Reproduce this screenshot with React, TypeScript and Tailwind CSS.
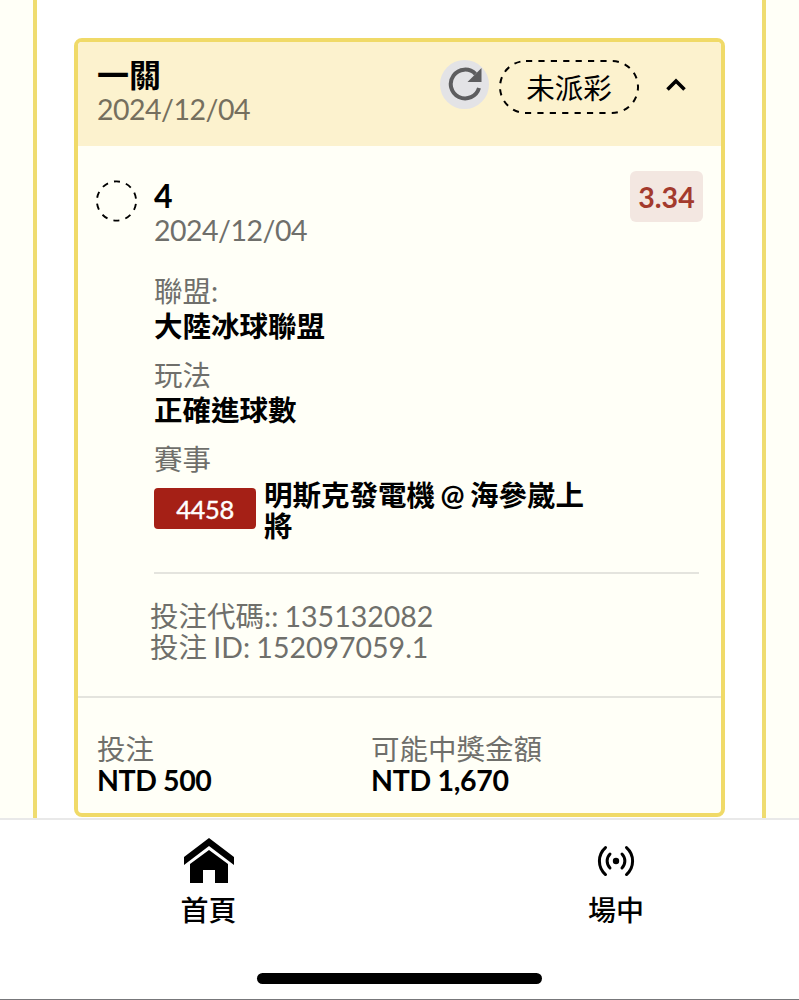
const details = [
  { label: "聯盟:", value: "大陸冰球聯盟" },
  { label: "玩法", value: "正確進球數" },
];

const HomeIcon = () => {
  return (
    <svg width="50" height="45" viewBox="0 0 50 45" fill="black">
      <path d="M25 0L50 19V27L25 8L0 27V19Z" />
      <path d="M25 12L44 26V45H31V32H19V45H6V26Z" />
    </svg>
  );
};

const LiveIcon = () => {
  return (
    <svg width="38" height="32" viewBox="0 0 38 32" fill="none" stroke="black" strokeWidth="3" strokeLinecap="round">
      <circle cx="19" cy="16" r="3.2" fill="black" stroke="none" />
      <path d="M13 9A10 10 0 0 0 13 23" />
      <path d="M25 9A10 10 0 0 1 25 23" />
      <path d="M8.5 2.5A18 18 0 0 0 8.5 29.5" />
      <path d="M29.5 2.5A18 18 0 0 1 29.5 29.5" />
    </svg>
  );
};

const BetHeader = () => {
  return (
    <div className="flex h-[104px] justify-between bg-[#fcf2ce] pl-[19px] pr-[35px]">
      <div className="pt-4">
        <div className="text-[32px] leading-[34px] font-bold">一關</div>
        <div className="leading-[34px] tracking-[-0.5px] text-[#756f5e]">2024/12/04</div>
      </div>
      <div className="flex h-[54px] mt-[17px] items-center">
        {/* Refresh */}
        <button className="flex size-[49px] mr-2.5 -mt-1 items-center justify-center rounded-full bg-[#e3e3e6]">
          <svg width="34" height="34" viewBox="0 0 34 34" fill="none">
            <path d="M27.5 7A14.4 14.4 0 1 0 31 21" stroke="#5d5d5f" strokeWidth="4" />
            <path d="M33.5 1V15H19.5Z" fill="#5d5d5f" />
          </svg>
        </button>
        <div className="relative flex h-[54px] w-[140px] mt-0.5 items-center justify-center">
          <svg className="absolute inset-0" width="140" height="54" fill="none">
            <rect x="1" y="1" width="138" height="52" rx="26" stroke="black" strokeWidth="2" strokeDasharray="6.2 6.2" />
          </svg>
          <span className="leading-[34px] mt-0.5">未派彩</span>
        </div>
        <svg className="ml-[27px] -mt-1" width="20" height="13" viewBox="0 0 20 13" fill="none">
          <path d="M1.5 11.5L10 3L18.5 11.5" stroke="black" strokeWidth="3.6" />
        </svg>
      </div>
    </div>
  );
};

const BetBody = () => {
  return (
    <div className="flex h-[550px] pl-[18px] pr-[18px]">
      <svg className="mt-[34px] mr-[16px] shrink-0" width="42" height="42" fill="none">
        <circle cx="20.5" cy="21" r="19.6" stroke="black" strokeWidth="1.9" strokeDasharray="6.15 6.16" strokeDashoffset="-3" />
      </svg>
      <div className="flex-1">
        <div className="flex h-[128px] justify-between pt-[25px]">
          <div className="pt-[7px]">
            <div className="text-[32px] leading-[35px] font-bold">4</div>
            <div className="leading-[35px] tracking-[-0.5px] text-[#6f6f6b]">2024/12/04</div>
          </div>
          <div className="flex h-[51px] w-[73px] items-center justify-center rounded-md bg-[#f3e7e1] pt-0.5 font-bold text-[#a33a2d]">
            3.34
          </div>
        </div>
        {details.map((item) => (
          <div key={item.label} className="mb-3.5 leading-[35px]">
            <div className="text-[#6f6f6b]">{item.label}</div>
            <div className="font-bold">{item.value}</div>
          </div>
        ))}
        <div className="leading-[35px] text-[#6f6f6b]">賽事</div>
        <div className="flex h-[97px] mr-1 items-start border-b-2 border-[#e4e4de] pt-[3px]">
          <div className="flex h-[41px] w-[102px] mt-2 mr-2 shrink-0 items-center justify-center rounded bg-[#a52016] pt-0.5 text-[25.5px] tracking-[-0.4px] text-white">
            <span className="[-webkit-text-stroke:0.4px_white]">4458</span>
          </div>
          <div className="w-[330px] leading-[31px] font-bold [word-spacing:-1.5px]">明斯克發電機 @ 海參崴上將</div>
        </div>
        <div className="mt-[27px] -ml-1 leading-[31px] text-[#6f6f6b] [word-spacing:-1px]">
          <div>投注代碼:: 135132082</div>
          <div>投注 ID: 152097059.1</div>
        </div>
      </div>
    </div>
  );
};

const BetFooter = () => {
  return (
    <div className="grid h-[117px] grid-cols-[274px_1fr] border-t-2 border-[#e4e4de] pl-[19px] pt-9 leading-[31px]">
      <div>
        <div className="text-[#6f6f6b]">投注</div>
        <div className="font-bold tracking-[-0.4px]">NTD 500</div>
      </div>
      <div>
        <div className="text-[#6f6f6b]">可能中獎金額</div>
        <div className="font-bold tracking-[-0.3px]">NTD 1,670</div>
      </div>
    </div>
  );
};

const BottomNav = () => {
  return (
    <div className="flex h-[182px] flex-col border-t-2 border-b border-t-[#e9e9e9] border-b-[#77777a] bg-white">
      <div className="flex h-[153px] pt-[18px]">
        <button className="flex w-[417px] shrink-0 flex-col items-center">
          <HomeIcon />
          <span className="mt-[9px] text-[28px] leading-[36px] font-medium">首頁</span>
        </button>
        <button className="flex w-[398px] shrink-0 flex-col items-center pt-[7px]">
          <LiveIcon />
          <span className="mt-[15px] text-[28px] leading-[36px] font-medium">場中</span>
        </button>
      </div>
      <div className="mx-auto h-[11px] w-[285px] rounded-full bg-black" />
    </div>
  );
};

const App = () => {
  return (
    <div
      lang="zh-TW"
      className="h-[1000px] w-[799px] overflow-hidden bg-white font-['Lato','Noto_Sans_CJK_TC',sans-serif] text-[28.5px] text-black"
    >
      <div className="flex h-[818px] justify-between bg-[#fffff7] px-[33px]">
        <div className="w-full border-x-4 border-[#efdc70] bg-white px-[37px] pt-[38px]">
          <div className="h-[779px] w-[651px] overflow-hidden rounded-lg border-4 border-[#f0da68] bg-[#fffff7]">
            <BetHeader />
            <BetBody />
            <BetFooter />
          </div>
        </div>
      </div>
      <BottomNav />
    </div>
  );
};

export default App;
